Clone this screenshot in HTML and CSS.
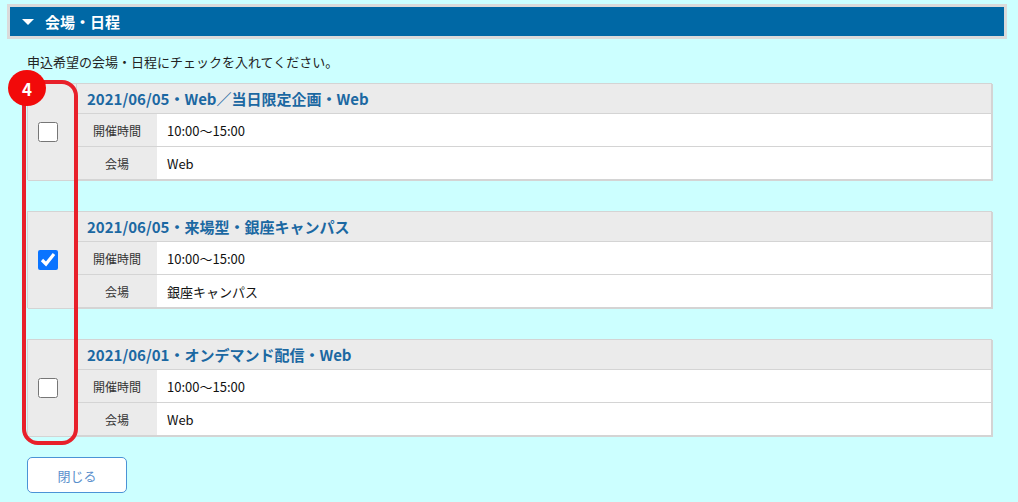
FILE: index.html
```html
<!DOCTYPE html>
<html lang="ja">
<head>
<meta charset="utf-8">
<link rel="stylesheet" href="styles.css">
</head>
<body>
<div class="page">
  <div class="section-head">
    <div class="section-bar">
      <svg class="tri" width="12" height="6" viewBox="0 0 12 6"><path d="M0 0H12L6 6Z" fill="#fff"/></svg>
      <span class="section-title">会場・日程</span>
    </div>
  </div>
  <div class="content">
    <p class="lead">申込希望の会場・日程にチェックを入れてください。</p>
    <div class="list">
      <div class="card">
        <div class="check-col"><input type="checkbox" class="chk"></div>
        <div class="main">
          <div class="card-title">2021/06/05・Web／当日限定企画・Web</div>
          <div class="row"><div class="label">開催時間</div><div class="value">10:00～15:00</div></div>
          <div class="row"><div class="label">会場</div><div class="value">Web</div></div>
        </div>
      </div>
      <div class="card">
        <div class="check-col"><input type="checkbox" class="chk" checked></div>
        <div class="main">
          <div class="card-title">2021/06/05・来場型・銀座キャンパス</div>
          <div class="row"><div class="label">開催時間</div><div class="value">10:00～15:00</div></div>
          <div class="row"><div class="label">会場</div><div class="value">銀座キャンパス</div></div>
        </div>
      </div>
      <div class="card">
        <div class="check-col"><input type="checkbox" class="chk"></div>
        <div class="main">
          <div class="card-title">2021/06/01・オンデマンド配信・Web</div>
          <div class="row"><div class="label">開催時間</div><div class="value">10:00～15:00</div></div>
          <div class="row"><div class="label">会場</div><div class="value">Web</div></div>
        </div>
      </div>
      <div class="highlight"></div>
      <div class="badge">4</div>
    </div>
    <button class="close-btn" type="button">閉じる</button>
  </div>
</div>
</body>
</html>
```
FILE: styles.css
```css
html, body {
  margin: 0;
  padding: 0;
  background: #ccffff;
}
body {
  font-family: "Noto Sans CJK JP", "Noto Sans", sans-serif;
  color: #222;
  width: 1018px;
  height: 502px;
  overflow: hidden;
}
.page {
  padding-top: 4px;
}
.section-head {
  margin: 0 11px 0 7px;
  border: 3px solid #dadada;
}
.section-bar {
  background: #0068a5;
  height: 29px;
  display: flex;
  align-items: center;
  padding-left: 12px;
}
.tri {
  display: block;
  margin-top: 1px;
}
.section-title {
  color: #fff;
  font-weight: bold;
  font-size: 15px;
  margin-left: 11px;
  line-height: 29px;
}
.content {
  padding: 0 26px 0 27px;
}
.lead {
  margin: 0;
  padding-top: 13px;
  font-size: 13px;
  line-height: 20px;
  color: #222;
  height: 31px;
}
.list {
  position: relative;
}
.card {
  display: flex;
  border: 1px solid #d4d4d4;
  border-bottom: 0;
  box-shadow: 1px 1px 0 #d4d4d4;
  margin-bottom: 31px;
  background: #fff;
}
.check-col {
  width: 49px;
  background: #ebebeb;
  border-right: 1px solid #d4d4d4;
  display: flex;
  align-items: center;
  padding-left: 10px;
  box-sizing: border-box;
}
.chk {
  width: 20px;
  height: 20px;
  margin: 0;
  accent-color: #0a74ff;
}
.main {
  flex: 1;
}
.card-title {
  height: 29px;
  background: #ebebeb;
  border-bottom: 1px solid #d4d4d4;
  color: #1b68a2;
  font-weight: bold;
  font-size: 15px;
  line-height: 29px;
  padding-left: 10px;
}
.row {
  display: flex;
  border-bottom: 1px solid #d4d4d4;
  height: 32px;
}
.label {
  width: 80px;
  background: #ebebeb;
  font-size: 12px;
  color: #333;
  display: flex;
  align-items: center;
  justify-content: center;
}
.value {
  flex: 1;
  background: #fff;
  font-size: 13px;
  color: #111;
  display: flex;
  align-items: center;
  padding-left: 10px;
}
.highlight {
  position: absolute;
  left: -5px;
  top: -3px;
  width: 56px;
  height: 365px;
  box-sizing: border-box;
  border: 4.5px solid #e8202a;
  border-radius: 16px;
}
.badge {
  position: absolute;
  left: -19px;
  top: -13px;
  width: 38px;
  height: 36px;
  border-radius: 50%;
  background: #f20a0a;
  color: #fff;
  font-weight: bold;
  font-size: 17px;
  display: flex;
  align-items: center;
  justify-content: center;
}
.close-btn {
  display: block;
  width: 100px;
  height: 36px;
  margin-top: -10px;
  background: #fff;
  border: 1px solid #4b93d6;
  border-radius: 5px;
  color: #5a8fcc;
  font-family: "Noto Sans CJK JP", sans-serif;
  font-size: 13px;
  padding: 0;
}
```
